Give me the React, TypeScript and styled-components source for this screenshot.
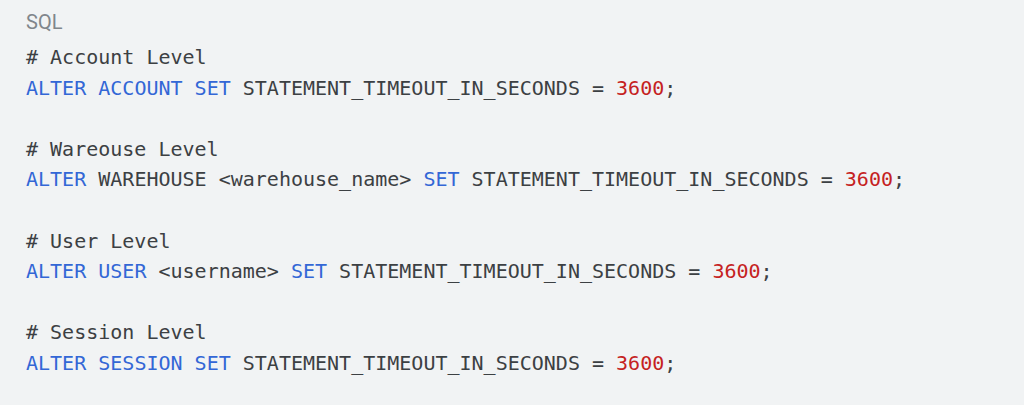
import React from "react";
import styled, { createGlobalStyle } from "styled-components";

const GlobalStyle = createGlobalStyle`
  html, body { margin: 0; padding: 0; background: #f1f3f4; }
  #root { min-height: 405px; }
`;

const Block = styled.div`
  background: #f1f3f4;
  width: 1024px;
  height: 405px;
  box-sizing: border-box;
  padding: 7px 26px 0 26px;
  display: flex;
  flex-direction: column;
`;

const Label = styled.div`
  font-family: Roboto, "Liberation Sans", sans-serif;
  font-size: 20px;
  line-height: 30px;
  color: #80868b;
`;

const Code = styled.pre`
  margin: 5px 0 0 0;
  font-family: "DejaVu Sans Mono", "Liberation Mono", monospace;
  font-size: 20px;
  line-height: 30.6px;
  color: #3c4043;
  white-space: pre;
`;

const Kw = styled.span`
  color: #3367d6;
`;

const Num = styled.span`
  color: #c5221f;
`;

type Stmt = { comment: string; kws: string[]; target?: string };

const stmts: Stmt[] = [
  { comment: "# Account Level", kws: ["ALTER", "ACCOUNT", "SET"] },
  { comment: "# Wareouse Level", kws: ["ALTER"], target: "WAREHOUSE <warehouse_name>" },
  { comment: "# User Level", kws: ["ALTER", "USER"], target: "<username>" },
  { comment: "# Session Level", kws: ["ALTER", "SESSION", "SET"] },
];

export default function App() {
  return (
    <>
      <GlobalStyle />
      <Block>
        <Label>SQL</Label>
        <Code>
          {stmts.map((s, i) => (
            <React.Fragment key={i}>
              {i > 0 ? "\n\n" : ""}
              {s.comment}
              {"\n"}
              {s.target ? (
                <>
                  {s.kws.map((k) => (
                    <React.Fragment key={k}>
                      <Kw>{k}</Kw>{" "}
                    </React.Fragment>
                  ))}
                  {s.target} <Kw>SET</Kw>
                </>
              ) : (
                s.kws.map((k, j) => (
                  <React.Fragment key={k}>
                    {j > 0 ? " " : ""}
                    <Kw>{k}</Kw>
                  </React.Fragment>
                ))
              )}
              {" STATEMENT_TIMEOUT_IN_SECONDS = "}
              <Num>3600</Num>;
            </React.Fragment>
          ))}
        </Code>
      </Block>
    </>
  );
}
